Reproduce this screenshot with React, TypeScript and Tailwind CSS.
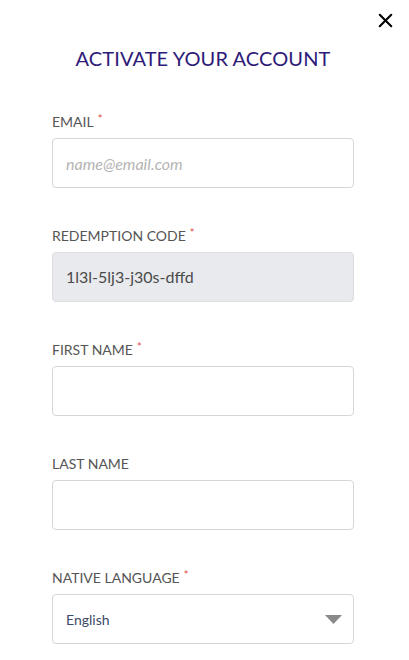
import { X } from 'lucide-react';

/**
 * ActivateAccount — sign-up modal body with the redemption fields.
 */
export default function App() {
  return (
    <div className="relative min-h-[660px] bg-white font-['Lato',sans-serif]">
      {/* ── Close ─────────────────────────────────────────────── */}
      <button className="absolute right-[12px] top-[9px] text-black" aria-label="Close">
        <X className="h-[23px] w-[23px]" strokeWidth={2.2} />
      </button>

      <div className="pl-[52px] pr-[55px] pt-[44px]">
        <h1 className="text-center text-[20px] leading-[28px] tracking-[0.1px] text-[#2e1a78]">
          ACTIVATE YOUR ACCOUNT
        </h1>

        <div className="mt-[38px] flex flex-col gap-[36px]">
          <Field label="EMAIL" required>
            <input
              className="h-[50px] w-full rounded-[4px] border border-[#d6d6d6] px-[13px] text-[16px] italic text-[#555] outline-none placeholder:text-[#b4b4b4]"
              placeholder="name@email.com"
            />
          </Field>

          <Field label="REDEMPTION CODE" required>
            <div className="flex h-[50px] w-full items-center rounded-[4px] border border-[#dcdde0] bg-[#e8eaed] px-[13px] text-[16px] text-[#4a4a4a]">
              1l3l-5lj3-j30s-dffd
            </div>
          </Field>

          <Field label="FIRST NAME" required>
            <input className="h-[50px] w-full rounded-[4px] border border-[#d6d6d6] px-[13px] text-[16px] outline-none" />
          </Field>

          <Field label="LAST NAME">
            <input className="h-[50px] w-full rounded-[4px] border border-[#d6d6d6] px-[13px] text-[16px] outline-none" />
          </Field>

          <Field label="NATIVE LANGUAGE" required>
            <div className="flex h-[50px] w-full items-center justify-between rounded-[4px] border border-[#d6d6d6] pl-[13px] pr-[11px]">
              <span className="text-[14px] text-[#3b4a66]">English</span>
              <svg width="17" height="9" viewBox="0 0 17 9">
                <path d="M0 0h17L8.5 9z" fill="#8a8a8a" />
              </svg>
            </div>
          </Field>
        </div>
      </div>
    </div>
  );
}

/* ─── Sub-components ─────────────────────────────────────────── */
function Field({
  label,
  required,
  children,
}: {
  label: string;
  required?: boolean;
  children: React.ReactNode;
}) {
  return (
    <div className="flex flex-col gap-[6px]">
      <label className="mt-[2px] flex items-start text-[14px] leading-[20px] text-[#555]">
        {label}
        {required && <span className="ml-[4px] -mt-[3px] text-[11px] text-[#e0493f]">*</span>}
      </label>
      {children}
    </div>
  );
}
